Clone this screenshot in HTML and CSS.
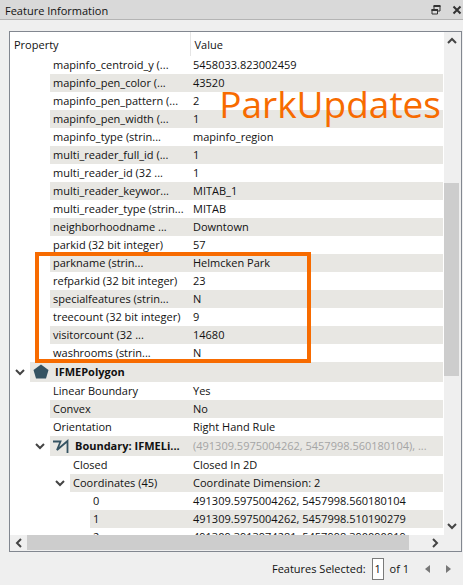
FILE: index.html
```
<!DOCTYPE html>
<html lang="en">
<head>
    <meta charset="UTF-8">
    <meta name="viewport" content="width=device-width, initial-scale=1.0">
    <title>Feature Information</title>
    <link rel="stylesheet" href="styles.css">
</head>
<body>
    <header class="titlebar">
        <h1>Feature Information</h1>
        <button type="button" aria-label="Float">
            <svg width="10" height="10" viewBox="0 0 10 10"><path d="M3 4V1h6v5H7" fill="none" stroke="#333" stroke-width="1"/><path d="M2.5 1H9.500" stroke="#333" stroke-width="2"/><path d="M1 4.500h5.500V9H1z" fill="none" stroke="#333" stroke-width="1"/><path d="M.5 5H7" stroke="#333" stroke-width="2"/></svg>
        </button>
        <button type="button" aria-label="Close">
            <svg width="10" height="10" viewBox="0 0 10 10"><path d="M1.500 1.500l7 7M8.500 1.500l-7 7" stroke="#333" stroke-width="2"/></svg>
        </button>
    </header>
    <main class="panel">
        <div class="view">
            <div class="tree">
                <table>
                    <thead>
                        <tr><th class="name">Property</th><th>Value</th></tr>
                    </thead>
                    <tbody>
                        <tr><td><div class="level2">mapinfo_centroid_y (...</div></td><td>5458033.823002459</td></tr>
                        <tr><td><div class="level2">mapinfo_pen_color (...</div></td><td>43520</td></tr>
                        <tr><td><div class="level2">mapinfo_pen_pattern (...</div></td><td>2</td></tr>
                        <tr><td><div class="level2">mapinfo_pen_width (...</div></td><td>1</td></tr>
                        <tr><td><div class="level2">mapinfo_type (strin...</div></td><td>mapinfo_region</td></tr>
                        <tr><td><div class="level2">multi_reader_full_id (...</div></td><td>1</td></tr>
                        <tr><td><div class="level2">multi_reader_id (32 ...</div></td><td>1</td></tr>
                        <tr><td><div class="level2">multi_reader_keywor...</div></td><td>MITAB_1</td></tr>
                        <tr><td><div class="level2">multi_reader_type (strin...</div></td><td>MITAB</td></tr>
                        <tr><td><div class="level2">neighborhoodname ...</div></td><td>Downtown</td></tr>
                        <tr><td><div class="level2">parkid (32 bit integer)</div></td><td>57</td></tr>
                        <tr><td><div class="level2">parkname (strin...</div></td><td>Helmcken Park</td></tr>
                        <tr><td><div class="level2">refparkid (32 bit integer)</div></td><td>23</td></tr>
                        <tr><td><div class="level2">specialfeatures (strin...</div></td><td>N</td></tr>
                        <tr><td><div class="level2">treecount (32 bit integer)</div></td><td>9</td></tr>
                        <tr><td><div class="level2">visitorcount (32 ...</div></td><td>14680</td></tr>
                        <tr><td><div class="level2">washrooms (strin...</div></td><td>N</td></tr>
                        <tr class="group">
                            <td>
                                <div class="branch">
                                    <button type="button" class="toggle" aria-label="Collapse IFMEPolygon"><svg width="10" height="7" viewBox="0 0 10 7"><path d="M1 1l4 4 4-4"/></svg></button>
                                    <div class="level0">
                                        <svg width="16" height="16" viewBox="0 0 16 16"><path d="M8 .5L15.500 6 13 14.500H3L.5 6z" fill="#355362"/></svg>
                                        IFMEPolygon
                                    </div>
                                </div>
                            </td>
                            <td></td>
                        </tr>
                        <tr><td><div class="level2">Linear Boundary</div></td><td>Yes</td></tr>
                        <tr><td><div class="level2">Convex</div></td><td>No</td></tr>
                        <tr><td><div class="level2">Orientation</div></td><td>Right Hand Rule</td></tr>
                        <tr class="group">
                            <td>
                                <div class="branch indent1">
                                    <button type="button" class="toggle" aria-label="Collapse Boundary"><svg width="10" height="7" viewBox="0 0 10 7"><path d="M1 1l4 4 4-4"/></svg></button>
                                    <div class="level0">
                                        <svg width="16" height="16" viewBox="0 0 16 16"><path d="M0 3.500h7.500L4 12 14.500 3v12" fill="none" stroke="#355362" stroke-width="1.800"/></svg>
                                        Boundary: IFMELi...
                                    </div>
                                </div>
                            </td>
                            <td class="muted">(491309.5975004262, 5457998.560180104), ...</td>
                        </tr>
                        <tr><td><div class="level3">Closed</div></td><td>Closed In 2D</td></tr>
                        <tr>
                            <td>
                                <div class="branch indent2">
                                    <button type="button" class="toggle" aria-label="Collapse Coordinates"><svg width="10" height="7" viewBox="0 0 10 7"><path d="M1 1l4 4 4-4"/></svg></button>
                                    <div class="leaf">Coordinates (45)</div>
                                </div>
                            </td>
                            <td>Coordinate Dimension: 2</td>
                        </tr>
                        <tr><td><div class="level4">0</div></td><td>491309.5975004262, 5457998.560180104</td></tr>
                        <tr><td><div class="level4">1</div></td><td>491309.5975004262, 5457998.510190279</td></tr>
                        <tr><td><div class="level4">2</div></td><td>491309.3913974281, 5457998.390090919</td></tr>
                    </tbody>
                </table>
                <div class="callout"></div>
                <p class="caption">ParkUpdates</p>
            </div>
            <div class="vscroll">
                <button type="button" aria-label="Scroll up"><svg width="10" height="7" viewBox="0 0 10 7"><path d="M1 6l4-4 4 4"/></svg></button>
                <div class="track"><div class="thumb"></div></div>
                <button type="button" aria-label="Scroll down"><svg width="10" height="7" viewBox="0 0 10 7"><path d="M1 1l4 4 4-4"/></svg></button>
            </div>
            <div class="hscroll">
                <button type="button" aria-label="Scroll left"><svg width="7" height="10" viewBox="0 0 7 10"><path d="M6 1L2 5l4 4"/></svg></button>
                <div class="track"><div class="thumb"></div></div>
                <button type="button" aria-label="Scroll right"><svg width="7" height="10" viewBox="0 0 7 10"><path d="M1 1l4 4-4 4"/></svg></button>
            </div>
        </div>
    </main>
    <footer class="pager">
        <label for="selected">Features Selected:</label>
        <input type="text" id="selected" value="1">
        <span>of 1</span>
        <button type="button" aria-label="Previous"><svg width="5" height="8" viewBox="0 0 5 8"><path d="M5 0v8L0 4z" fill="#777"/></svg></button>
        <button type="button" aria-label="Next"><svg width="5" height="8" viewBox="0 0 5 8"><path d="M0 0v8l5-4z" fill="#777"/></svg></button>
    </footer>
</body>
</html>
```
FILE: styles.css
```
* {
    box-sizing: border-box;
}
body {
    display: flex;
    flex-direction: column;
    height: 100vh;
    margin: 0;
    background-color: #efefef;
    color: #111;
    font-family: "Open Sans", "Noto Sans", sans-serif;
    font-size: 11px;
    line-height: 18px;
}
button {
    display: flex;
    align-items: center;
    justify-content: center;
    padding: 0;
    border: none;
    background: none;
}
.titlebar {
    display: flex;
    align-items: center;
    gap: 11px;
    height: 20px;
    padding: 0 1px 0 5px;
    border-bottom: 1px solid #b4b4b4;
    background-color: #d9d9d9;
}
.titlebar h1 {
    flex: 1;
    margin: 0;
    padding-top: 2px;
    font-size: 11px;
    font-weight: normal;
}
.panel {
    display: flex;
    flex: 1;
    min-height: 0;
    padding: 11px 1px 0 9px;
}
.view {
    display: grid;
    flex: 1;
    grid-template-columns: 1fr 17px;
    grid-template-rows: 1fr 16px;
    min-width: 0;
    border: 1px solid #828790;
    background-color: #efefef;
}
.tree {
    position: relative;
    overflow: hidden;
    min-height: 0;
    padding-right: 1px;
    background-color: white;
}
table {
    width: 100%;
    table-layout: fixed;
    border-collapse: collapse;
}
th {
    height: 24px;
    padding: 2px 4px 0;
    font-weight: normal;
    text-align: left;
}
th.name {
    width: 180px;
    border-right: 1px solid #e5e5e5;
}
td {
    height: 18px;
    padding: 0 3px;
    line-height: 18px;
    white-space: nowrap;
}
td:first-child {
    padding: 0;
}
.group td {
    height: 20px;
    line-height: 20px;
}
tbody tr:nth-child(even) td:last-child,
tbody tr:nth-child(even) .level0,
tbody tr:nth-child(even) .leaf,
tbody tr:nth-child(even) .level2,
tbody tr:nth-child(even) .level3,
tbody tr:nth-child(even) .level4 {
    background-color: #e8e7e3;
}
.level2,
.level3,
.level4,
.leaf {
    padding-left: 3px;
}
.level2 {
    margin-left: 40px;
}
.level3 {
    margin-left: 60px;
}
.level4 {
    margin-left: 80px;
}
.branch {
    display: flex;
}
.indent1 {
    padding-left: 20px;
}
.indent2 {
    padding-left: 40px;
}
.toggle {
    width: 20px;
}
.toggle path,
.vscroll path,
.hscroll path {
    fill: none;
    stroke: #444;
    stroke-width: 2;
}
.level0 {
    display: flex;
    flex: 1;
    align-items: center;
    gap: 6px;
    padding-left: 3px;
    font-weight: bold;
}
.leaf {
    flex: 1;
}
.muted {
    color: #a5a5a5;
}
.callout {
    position: absolute;
    top: 220px;
    left: 25px;
    width: 276px;
    height: 111px;
    border: 4px solid #f76b00;
}
.caption {
    position: absolute;
    top: 47px;
    right: 3px;
    margin: 0;
    color: #f76b00;
    font-size: 37px;
    line-height: 50px;
}
.vscroll {
    display: flex;
    flex-direction: column;
    padding-right: 2px;
}
.vscroll button {
    height: 17px;
}
.hscroll {
    display: flex;
    grid-column: 1 / 3;
    padding-right: 17px;
}
.hscroll button {
    width: 17px;
}
.track {
    flex: 1;
}
.thumb {
    background-color: #cdcdcd;
}
.vscroll .track {
    padding-top: 134px;
}
.vscroll .thumb {
    height: 193px;
}
.hscroll .thumb {
    height: 15px;
    margin-right: 18px;
}
.pager {
    display: flex;
    align-items: center;
    justify-content: flex-end;
    height: 33px;
    padding-right: 12px;
}
.pager input {
    width: 12px;
    height: 22px;
    margin: 0 6px;
    padding: 0 2px;
    border: 1px solid #7a7a7a;
    background-color: white;
    color: #111;
    font: inherit;
}
.pager button {
    margin-left: 16px;
}
```
